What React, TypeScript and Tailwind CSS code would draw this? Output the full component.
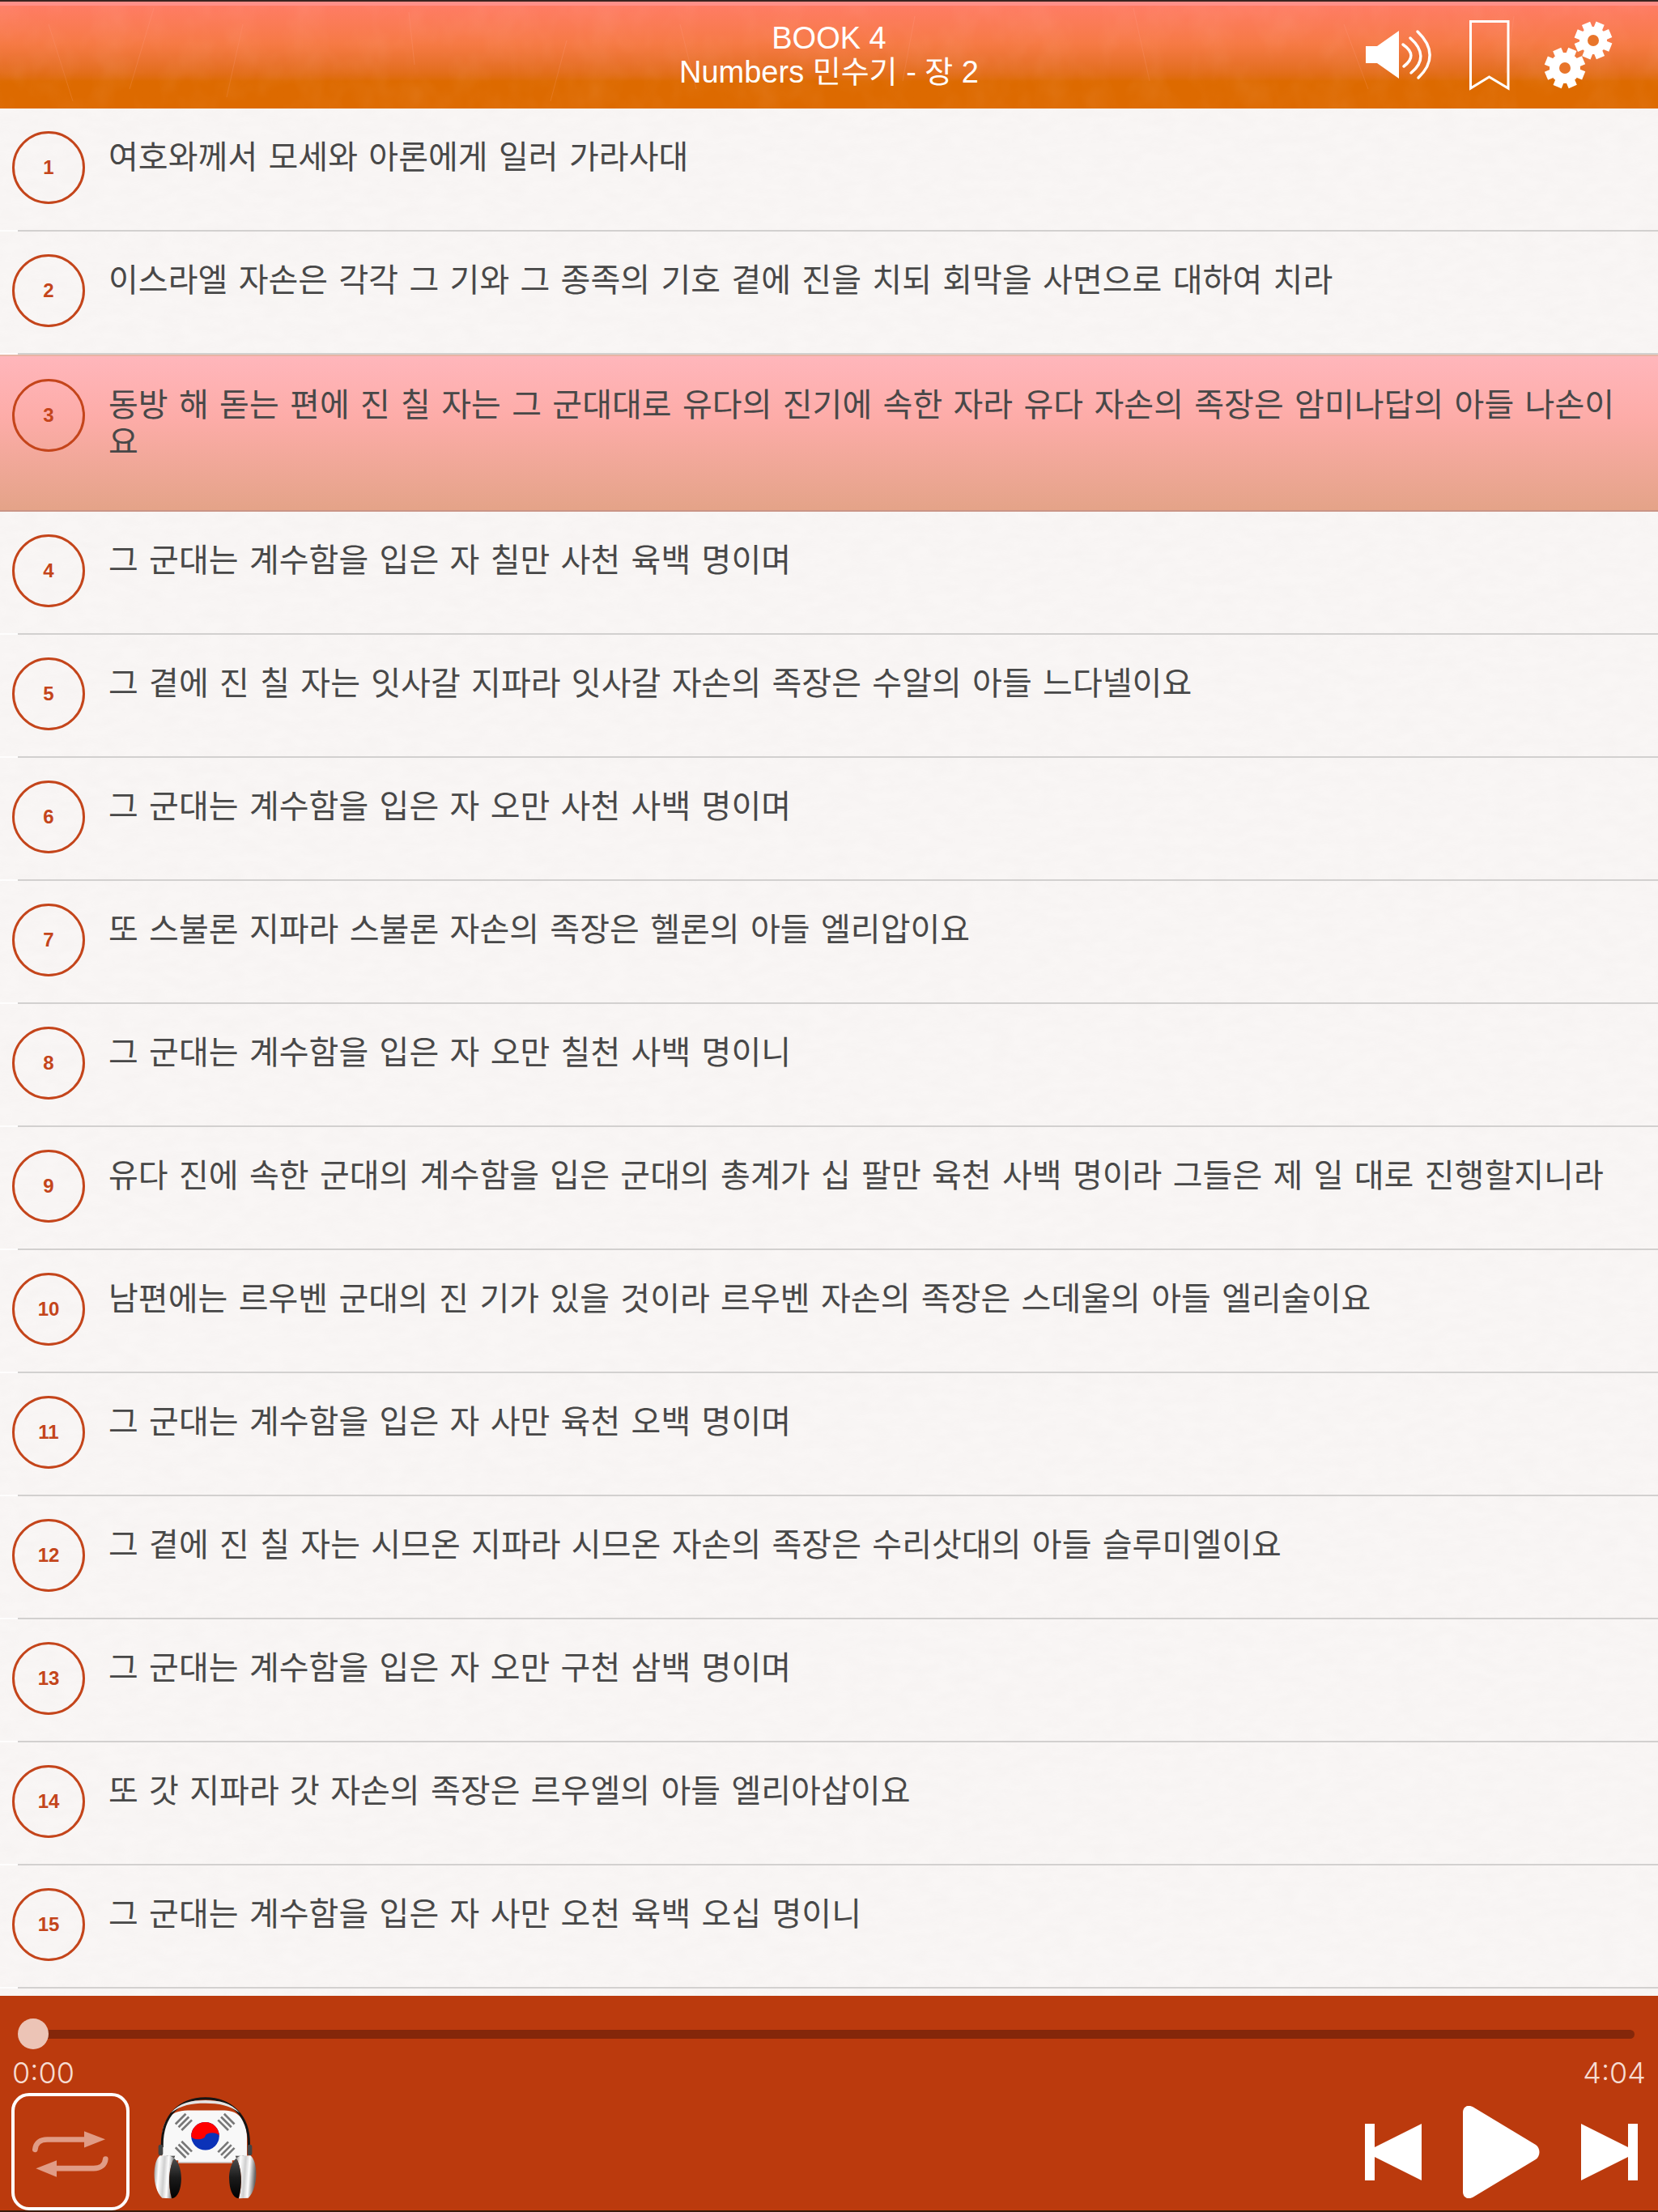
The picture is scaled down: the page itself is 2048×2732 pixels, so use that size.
import type { ReactNode } from 'react';

const verses = [
  '여호와께서 모세와 아론에게 일러 가라사대',
  '이스라엘 자손은 각각 그 기와 그 종족의 기호 곁에 진을 치되 회막을 사면으로 대하여 치라',
  '동방 해 돋는 편에 진 칠 자는 그 군대대로 유다의 진기에 속한 자라 유다 자손의 족장은 암미나답의 아들 나손이요',
  '그 군대는 계수함을 입은 자 칠만 사천 육백 명이며',
  '그 곁에 진 칠 자는 잇사갈 지파라 잇사갈 자손의 족장은 수알의 아들 느다넬이요',
  '그 군대는 계수함을 입은 자 오만 사천 사백 명이며',
  '또 스불론 지파라 스불론 자손의 족장은 헬론의 아들 엘리압이요',
  '그 군대는 계수함을 입은 자 오만 칠천 사백 명이니',
  '유다 진에 속한 군대의 계수함을 입은 군대의 총계가 십 팔만 육천 사백 명이라 그들은 제 일 대로 진행할지니라',
  '남편에는 르우벤 군대의 진 기가 있을 것이라 르우벤 자손의 족장은 스데울의 아들 엘리술이요',
  '그 군대는 계수함을 입은 자 사만 육천 오백 명이며',
  '그 곁에 진 칠 자는 시므온 지파라 시므온 자손의 족장은 수리삿대의 아들 슬루미엘이요',
  '그 군대는 계수함을 입은 자 오만 구천 삼백 명이며',
  '또 갓 지파라 갓 자손의 족장은 르우엘의 아들 엘리아삽이요',
  '그 군대는 계수함을 입은 자 사만 오천 육백 오십 명이니',
];

const scratches = [
  'M60 30 L90 125', 'M190 10 L160 110', 'M300 30 L280 120', 'M505 15 L512 80', 'M680 125 L700 50',
  'M840 30 L860 110', 'M1130 20 L1115 100', 'M1400 10 L1420 100', 'M1660 30 L1690 110', 'M1870 20 L1860 90',
];

function Gear({ cx, cy, r }: { cx: number; cy: number; r: number }) {
  const angles = [0, 45, 90, 135, 180, 225, 270, 315];
  return (
    <g>
      {angles.map((a) => (
        <rect key={a} x={cx - 5.5} y={cy - r} width={11} height={r} fill="white" transform={`rotate(${a + 22} ${cx} ${cy})`} />
      ))}
      <circle cx={cx} cy={cy} r={r - 6} fill="white" />
      <circle cx={cx} cy={cy} r={7} fill="#e8752a" />
    </g>
  );
}

function HeaderIcons() {
  return (
    <svg width="362" height="134" viewBox="1686 0 362 134" className="shrink-0">
      <path d="M1687 57 H1701 L1728 38 V97 L1701 78 H1687 Z" fill="white" />
      <g fill="none" stroke="white" strokeWidth="3.5" strokeLinecap="round">
        <path d="M1733 55 C1746 64 1746 73 1734 82" />
        <path d="M1742 47 C1759 62 1759 77 1743 90" />
        <path d="M1751 39 C1771 58 1771 78 1752 96" />
      </g>
      <path d="M1816.500 26.500 H1863 V109 L1839.500 95 L1816.500 109 Z" fill="none" stroke="white" strokeWidth="3" />
      <Gear cx={1968} cy={50} r={23} />
      <Gear cx={1933} cy={84} r={25} />
    </svg>
  );
}

function Header() {
  return (
    <header className="relative flex h-[134px] shrink-0 items-center justify-end overflow-hidden bg-gradient-to-b from-[#ff7c64] from-5% via-[#f67a45] via-40% to-[#dd6a00] to-75%">
      <svg className="absolute inset-0 h-full w-full opacity-20" viewBox="0 0 2048 134" preserveAspectRatio="none">
        <filter id="grain" x="0" y="0" width="100%" height="100%">
          <feTurbulence type="fractalNoise" baseFrequency="0.025 0.02" numOctaves="3" seed="4" />
          <feColorMatrix values="0 0 0 0 1  0 0 0 0 0.65  0 0 0 0 0.55  0.8 0 0 0 -0.3" />
        </filter>
        <rect width="2048" height="134" filter="url(#grain)" />
        <g stroke="#ffb0a0" strokeWidth="1" fill="none">
          {scratches.map((d) => (
            <path key={d} d={d} />
          ))}
        </g>
      </svg>
      <div className="absolute inset-x-0 top-0 h-[2px] bg-[#3a2420]" />
      <div className="absolute inset-x-0 top-[2px] h-[5px] bg-[#ff9089]" />
      <div className="absolute inset-x-0 top-[26px] text-center text-[38px] leading-[42px] text-white [font-family:'Liberation_Sans','Noto_Sans_CJK_KR',sans-serif]">
        <p>BOOK 4</p>
        <p>Numbers 민수기 - 장 2</p>
      </div>
      <div className="relative">
        <HeaderIcons />
      </div>
    </header>
  );
}

function VerseRow({ num, text, active }: { num: number; text: string; active: boolean }) {
  return (
    <div
      className={
        active
          ? 'relative flex h-[194px] flex-col border-y-2 border-t-[#e8b4a4] border-b-[#c99486] bg-gradient-to-b from-[#ffb6bb] via-[#fdaca8] via-40% to-[#e4a388]'
          : 'relative flex h-[152px] flex-col'
      }
    >
      <div className="flex flex-1 items-start pl-[15px] pt-[28px]">
        <div className="flex h-[90px] w-[90px] shrink-0 items-center justify-center rounded-full border-[3.5px] border-[#c4451b] text-[24px] font-bold text-[#c4451b] [font-family:'Liberation_Sans',sans-serif]">
          {num}
        </div>
        <p className="ml-[29px] w-[1880px] pt-[6px] text-[40px] leading-[46px] tracking-[0.05px] text-[#484848] [word-spacing:4.25px]">{text}</p>
      </div>
      {!active && (
        <div className="flex h-[2px] bg-white/80">
          <div className="ml-[22px] flex-1 bg-[#d2d0cf]" />
        </div>
      )}
    </div>
  );
}

function HeadsetFlag() {
  return (
    <svg width="133" height="133" viewBox="200 170 400 400" className="shrink-0">
      <defs>
        <linearGradient id="chrome" x1="0" y1="0" x2="1" y2="0.15">
          <stop offset="0" stopColor="#888888" />
          <stop offset="0.25" stopColor="#ffffff" />
          <stop offset="0.5" stopColor="#cfcfcf" />
          <stop offset="0.7" stopColor="#ffffff" />
          <stop offset="1" stopColor="#666666" />
        </linearGradient>
        <linearGradient id="pad" x1="0" y1="0" x2="0" y2="1">
          <stop offset="0" stopColor="#555555" />
          <stop offset="0.5" stopColor="#1c1c1c" />
          <stop offset="1" stopColor="#000000" />
        </linearGradient>
      </defs>
      <path d="M240 420 V335 C240 280 265 235 335 235 H470 C530 235 555 280 555 335 V420 H500 V430 H300 V420 Z" fill="#f8f8f8" />
      <path d="M300 428 H500" stroke="#bbbbbb" strokeWidth="3" />
      <path d="M240 372 C236 250 310 190 400 190 C490 190 568 250 562 372" fill="none" stroke="#151515" strokeWidth="9" />
      <path d="M272 244 C305 205 350 197 400 197 C450 197 495 205 528 244 C490 215 450 208 400 208 C350 208 310 215 272 244 Z" fill="#e4e4e4" />
      <rect x="226" y="362" width="17" height="40" rx="8" fill="#444444" />
      <rect x="557" y="362" width="17" height="40" rx="8" fill="#444444" />
      <circle cx="400" cy="330" r="52" fill="#0b32b8" />
      <path d="M348 330 A52 52 0 0 1 452 330 A26 12 0 0 0 400 330 A26 12 0 0 1 348 330 Z" fill="#ff0000" />
      {[
        { x: 320, y: 278, r: -45 },
        { x: 478, y: 278, r: 45 },
        { x: 320, y: 380, r: 45 },
        { x: 478, y: 382, r: -45 },
      ].map((t) => (
        <g key={t.x * t.y} transform={`rotate(${t.r} ${t.x} ${t.y})`} fill="#777777">
          <rect x={t.x - 27} y={t.y - 20} width="54" height="8" />
          <rect x={t.x - 27} y={t.y - 4} width="54" height="8" />
          <rect x={t.x - 27} y={t.y + 12} width="54" height="8" />
        </g>
      ))}
      <path d="M232 402 C205 420 200 520 240 560 L275 562 C262 510 262 450 288 404 Z" fill="url(#chrome)" />
      <path d="M254 404 C288 398 312 440 311 490 C310 525 300 558 276 562 C262 512 262 450 288 404 Z" fill="url(#pad)" />
      <path d="M568 402 C595 420 600 520 560 560 L525 562 C538 510 538 450 512 404 Z" fill="url(#chrome)" />
      <path d="M546 404 C512 398 488 440 489 490 C490 525 500 558 524 562 C538 512 538 450 512 404 Z" fill="url(#pad)" />
    </svg>
  );
}

function RepeatButton() {
  return (
    <div className="flex h-[145px] w-[146px] shrink-0 items-center justify-center rounded-[22px] border-[4px] border-white pt-[6px]">
      <svg width="94" height="57" viewBox="115 577 282 170" fill="none">
        <path d="M125 645 C127 620 145 608 170 608 H312" stroke="#e09c86" strokeWidth="20" strokeLinecap="round" />
        <path d="M307 577 L385 607 L307 638 Z" fill="#e09c86" />
        <path d="M386 680 C384 703 366 715 342 715 H200" stroke="#e09c86" strokeWidth="20" strokeLinecap="round" />
        <path d="M205 685 L128 715 L205 747 Z" fill="#e09c86" />
      </svg>
    </div>
  );
}

function TransportIcon({ width, height, children }: { width: number; height: number; children: ReactNode }) {
  return (
    <svg width={width} height={height} viewBox={`0 0 ${width} ${height}`} fill="white" className="shrink-0">
      {children}
    </svg>
  );
}

function Player() {
  return (
    <footer className="flex flex-1 flex-col border-b-2 border-[#3a1a0c] bg-[#bb3a0d]">
      <div className="relative ml-[41px] mr-[29px] mt-[42px] h-[11px] rounded-r-full bg-[#84270a]">
        <div className="absolute left-[-19px] top-[-14px] h-[38px] w-[38px] rounded-full bg-[#ecc4b6]" />
      </div>
      <div className="mt-[20px] flex justify-between pl-[15px] pr-[15px] text-[36px] font-light leading-[44px] text-[#f6dcd2] [font-family:Inter,sans-serif]">
        <span>0:00</span>
        <span>4:04</span>
      </div>
      <div className="flex items-start pl-[14px] pr-[25px] pt-[3px]">
        <RepeatButton />
        <div className="ml-[27px]">
          <HeadsetFlag />
        </div>
        <div className="ml-auto mt-[16px] flex items-center gap-[51px]">
          <TransportIcon width={70} height={70}>
            <path d="M0 0 H12 V29 L70 0 V70 L12 41 V70 H0 Z" />
          </TransportIcon>
          <TransportIcon width={95} height={114}>
            <path d="M0 8 C0 1 6 -2 12 1 L90 48 C96 52 96 62 90 66 L12 113 C6 116 0 113 0 106 Z" />
          </TransportIcon>
          <TransportIcon width={70} height={70}>
            <path d="M70 0 H58 V29 L0 0 V70 L58 41 V70 H70 Z" />
          </TransportIcon>
        </div>
      </div>
    </footer>
  );
}

export default function App() {
  return (
    <div className="flex h-[2732px] w-[2048px] flex-col overflow-hidden bg-[#f9f6f5] [font-family:'Noto_Sans_CJK_KR','Liberation_Sans',sans-serif]">
      <Header />
      <main className="relative h-[2331px] shrink-0">
        {/* faint paper grain behind the rows */}
        <svg className="absolute inset-0 h-full w-full opacity-[0.04]">
          <filter id="paper" x="0" y="0" width="100%" height="100%">
            <feTurbulence type="fractalNoise" baseFrequency="0.04 0.09" numOctaves="3" seed="9" />
            <feColorMatrix values="0 0 0 0 0.4  0 0 0 0 0.35  0 0 0 0 0.35  1.2 0 0 0 -0.3" />
          </filter>
          <rect width="100%" height="100%" filter="url(#paper)" />
        </svg>
        {verses.map((text, i) => (
          <VerseRow key={i} num={i + 1} text={text} active={i === 2} />
        ))}
      </main>
      <Player />
    </div>
  );
}
